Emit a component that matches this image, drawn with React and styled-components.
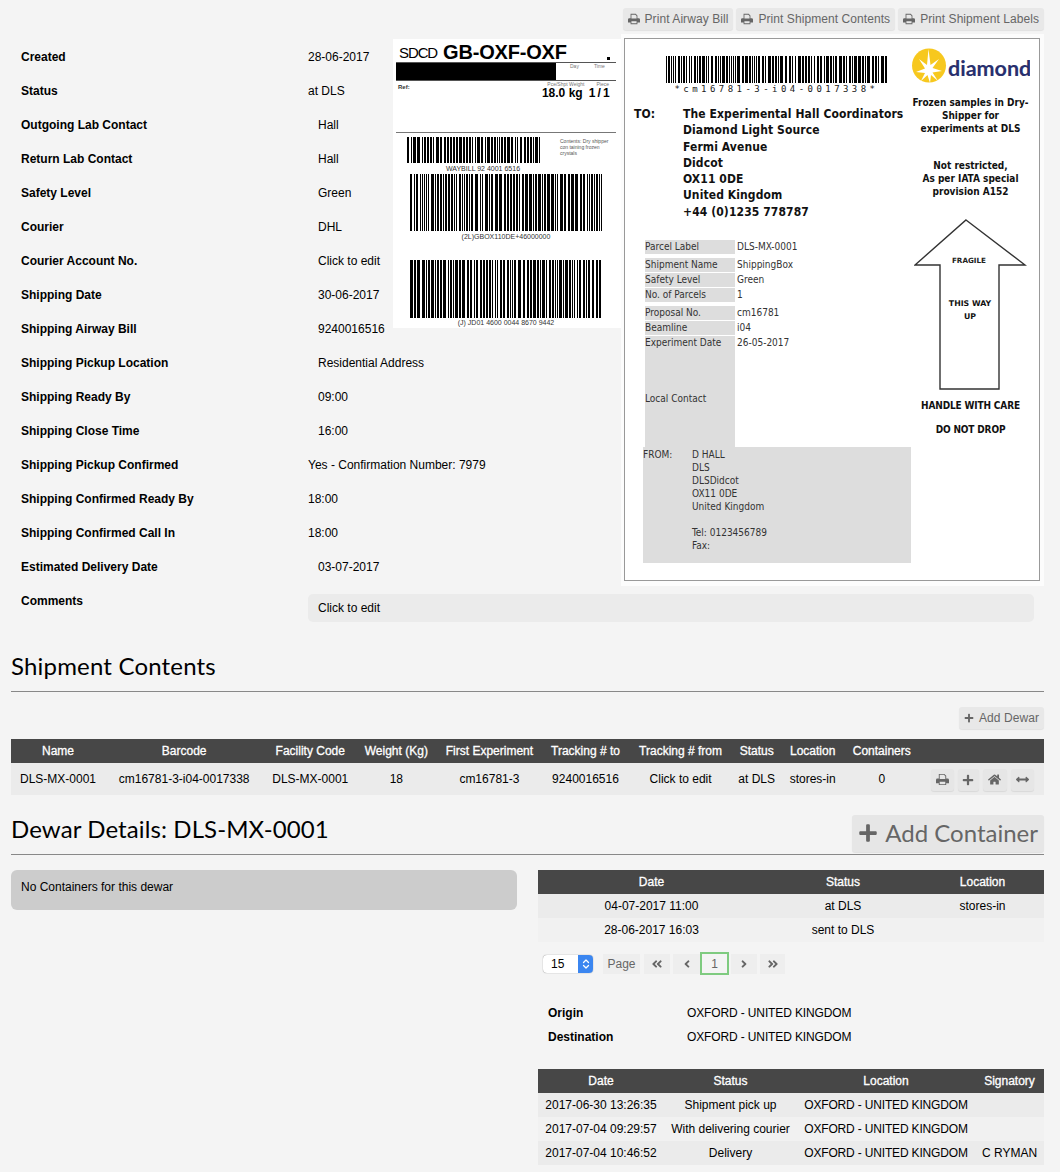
import React from 'react';
import styled, { createGlobalStyle } from 'styled-components';
import { FaPlus, FaHome, FaArrowsAltH, FaAngleDoubleLeft, FaAngleDoubleRight, FaAngleLeft, FaAngleRight } from 'react-icons/fa';
import { ChevronsUpDown } from 'lucide-react';

const details = [
    ['Created', '28-06-2017'],
    ['Status', 'at DLS'],
    ['Outgoing Lab Contact', 'Hall', true],
    ['Return Lab Contact', 'Hall', true],
    ['Safety Level', 'Green', true],
    ['Courier', 'DHL', true],
    ['Courier Account No.', 'Click to edit', true],
    ['Shipping Date', '30-06-2017', true],
    ['Shipping Airway Bill', '9240016516', true],
    ['Shipping Pickup Location', 'Residential Address', true],
    ['Shipping Ready By', '09:00', true],
    ['Shipping Close Time', '16:00', true],
    ['Shipping Pickup Confirmed', 'Yes - Confirmation Number: 7979'],
    ['Shipping Confirmed Ready By', '18:00'],
    ['Shipping Confirmed Call In', '18:00'],
    ['Estimated Delivery Date', '03-07-2017', true],
];

const dewarCols = [94, 158, 94, 78, 108, 84, 106, 46, 66, 72, 126];
const dewarHead = ['Name', 'Barcode', 'Facility Code', 'Weight (Kg)', 'First Experiment', 'Tracking # to', 'Tracking # from', 'Status', 'Location', 'Containers', ''];
const dewarRow = ['DLS-MX-0001', 'cm16781-3-i04-0017338', 'DLS-MX-0001', '18', 'cm16781-3', '9240016516', 'Click to edit', 'at DLS', 'stores-in', '0'];

const historyCols = [227, 156, 123];
const historyRows = [
    ['04-07-2017 11:00', 'at DLS', 'stores-in'],
    ['28-06-2017 16:03', 'sent to DLS', ''],
];

const trackingCols = [126, 133, 178, 69];
const trackingRows = [
    ['2017-06-30 13:26:35', 'Shipment pick up', 'OXFORD - UNITED KINGDOM', ''],
    ['2017-07-04 09:29:57', 'With delivering courier', 'OXFORD - UNITED KINGDOM', ''],
    ['2017-07-04 10:46:52', 'Delivery', 'OXFORD - UNITED KINGDOM', 'C RYMAN'],
];

const parcelGroups = [
    [['Parcel Label', 'DLS-MX-0001']],
    [['Shipment Name', 'ShippingBox'], ['Safety Level', 'Green'], ['No. of Parcels', '1']],
    [['Proposal No.', 'cm16781'], ['Beamline', 'i04'], ['Experiment Date', '26-05-2017']],
];

const PrintIcon = ({ size = 12 }) => (
    <svg width={size} height={size} viewBox="0 0 14 14" fill="currentColor">
        <path fillRule="evenodd" d="M3 1h6l2 2v3h1.5A1.5 1.5 0 0 1 14 7.5V11h-3v2H3v-2H0V7.5A1.5 1.5 0 0 1 1.5 6H3z M4 2v4.5h6V3.5L8.5 2z M4 9.5V12h6V9.5z" />
    </svg>
);

// pseudo random bars, seeded so the picture stays the same on every run
const Barcode = ({ code, width, height }) => {
    let seed = 0;
    for (const c of code) seed = (seed * 31 + c.charCodeAt(0)) % 9973;
    const next = () => {
        seed = (seed * 1103 + 12345) % 9973;
        return seed;
    };
    const bars = [];
    let x = 0;
    while (x < width) {
        const w = Math.min([1, 1, 2, 3, 2][next() % 5], width - x);
        bars.push(<rect key={x} x={x} y={0} width={w} height={height} />);
        x += w + [1, 1, 1, 2][next() % 4];
    }
    return (
        <svg width={width} height={height} viewBox={`0 0 ${width} ${height}`} shapeRendering="crispEdges" fill="#000" style={{ display: 'block' }}>
            {bars}
        </svg>
    );
};

const DiamondLogo = () => (
    <svg width="118" height="36" viewBox="0 0 118 36">
        <circle cx="17" cy="17.5" r="17" fill="#f7c81e" />
        <path
            fill="#fff"
            d="M16.5 1 L18.5 17 L27 11 L20.5 20 L30 23 L20.5 24.5 L26 33 L19 27 L18 35 L15.5 27 L9 33 L13 25 L4 24 L13 20.5 L7 11 L15 17 Z"
        />
        <text x="36" y="28" fontFamily="Lato, sans-serif" fontSize="21.5" fill="#28306e" stroke="#28306e" strokeWidth="0.1">diamond</text>
    </svg>
);

const FragileArrow = () => (
    <svg width="113" height="172" viewBox="0 0 113 172">
        <path d="M52 1 L111 46 L85 46 L85 170 L26 170 L26 46 L1 46 Z" fill="#fff" stroke="#333" strokeWidth="1.4" />
        <text x="55" y="44" textAnchor="middle" fontFamily="DejaVu Sans, sans-serif" fontSize="7.2" fontWeight="700" fill="#222">FRAGILE</text>
        <text x="56" y="87" textAnchor="middle" fontFamily="DejaVu Sans, sans-serif" fontSize="7.8" fontWeight="700" fill="#111">THIS WAY</text>
        <text x="56" y="100" textAnchor="middle" fontFamily="DejaVu Sans, sans-serif" fontSize="7.8" fontWeight="700" fill="#111">UP</text>
    </svg>
);

const DataTable = ({ cols, head, rows, rowHeight = 24, children }) => (
    <Table>
        <colgroup>
            {cols.map((w, i) => <Col key={i} $w={w} />)}
        </colgroup>
        <thead>
            <tr>{head.map((h, i) => <Th key={i}>{h}</Th>)}</tr>
        </thead>
        <tbody>
            {rows.map((r, i) => (
                <Tr key={i} $h={rowHeight}>
                    {r.map((c, j) => <Td key={j}>{c}</Td>)}
                    {children}
                </Tr>
            ))}
        </tbody>
    </Table>
);

const AirwayBill = () => (
    <Airway>
        <AirwayTitle>
            <Sdcd>SDCD</Sdcd>
            <Route>GB-OXF-OXF</Route>
            <Dot />
        </AirwayTitle>
        <AirwayBand>
            <BlackBar />
            <Tiny $left={14}>Day</Tiny>
            <Tiny $left={15}>Time</Tiny>
        </AirwayBand>
        <AirwayRef>
            <RefLabel>Ref:</RefLabel>
            <Weight>
                <WeightHead><Tiny>Pce/Shpt Weight</Tiny><Tiny $left={12}>Piece</Tiny></WeightHead>
                <WeightValue><span>18.0 kg</span><Pieces>1 / 1</Pieces></WeightValue>
            </Weight>
        </AirwayRef>
        <WaybillRow>
            <BarBlock>
                <Barcode code="92400165" width={133} height={26} />
                <BarText $top={1} $shift={19}>WAYBILL 92 4001 6516</BarText>
            </BarBlock>
            <Contents>Contents: Dry shipper<br />con taining frozen<br />crystals</Contents>
        </WaybillRow>
        <BarBlock $left={14} $top={1}>
            <Barcode code="GBOX110DE" width={192} height={57} />
            <BarText $top={1}>(2L)GBOX110DE+46000000</BarText>
        </BarBlock>
        <BarBlock $left={14} $top={19}>
            <Barcode code="JD01460" width={192} height={58} />
            <BarText>(J) JD01 4600 0044 8670 9442</BarText>
        </BarBlock>
    </Airway>
);

const ShippingLabel = () => (
    <LabelPanel>
        <LabelFrame>
            <LabelLeft>
                <CodeBlock>
                    <Barcode code="cm16781-3-i04" width={221} height={27} />
                    <CodeText>*cm16781-3-i04-0017338*</CodeText>
                </CodeBlock>
                <Address>
                    <AddressTo>TO:</AddressTo>
                    <div>
                        The Experimental Hall Coordinators<br />
                        Diamond Light Source<br />
                        Fermi Avenue<br />
                        Didcot<br />
                        OX11 0DE<br />
                        United Kingdom<br />
                        +44 (0)1235 778787
                    </div>
                </Address>
                <ParcelTable>
                    {parcelGroups.map((g, i) => (
                        <ParcelGroup key={i}>
                            {g.map(([k, v]) => (
                                <ParcelRow key={k}>
                                    <ParcelKey>{k}</ParcelKey>
                                    <span>{v}</span>
                                </ParcelRow>
                            ))}
                        </ParcelGroup>
                    ))}
                    <ParcelRow>
                        <ParcelKey $tall>Local Contact</ParcelKey>
                        <span />
                    </ParcelRow>
                </ParcelTable>
                <FromBox>
                    <FromLabel>FROM:</FromLabel>
                    <div>
                        D HALL<br />DLS<br />DLSDidcot<br />OX11 0DE<br />United Kingdom<br /><br />
                        Tel: 0123456789<br />Fax:
                    </div>
                </FromBox>
            </LabelLeft>
            <LabelRight>
                <DiamondLogo />
                <LabelNote $top={12}>Frozen samples in Dry-<br />Shipper for<br />experiments at DLS</LabelNote>
                <LabelNote $top={24}>Not restricted,<br />As per IATA special<br />provision A152</LabelNote>
                <ArrowWrap><FragileArrow /></ArrowWrap>
                <Handle $top={8}>HANDLE WITH CARE</Handle>
                <Handle $top={10}>DO NOT DROP</Handle>
            </LabelRight>
        </LabelFrame>
    </LabelPanel>
);

const App = () => {
    return (
        <Page>
            <GlobalStyle />
            <TopBar>
                <Button><PrintIcon /> Print Airway Bill</Button>
                <Button><PrintIcon /> Print Shipment Contents</Button>
                <Button><PrintIcon /> Print Shipment Labels</Button>
            </TopBar>
            <DetailArea>
                <ShippingLabel />
                <AirwayBill />
                {details.map(([k, v, editable]) => (
                    <DetailRow key={k}>
                        <DetailLabel>{k}</DetailLabel>
                        <DetailValue $editable={editable}>{v}</DetailValue>
                    </DetailRow>
                ))}
                <DetailRow>
                    <DetailLabel>Comments</DetailLabel>
                    <CommentBox>Click to edit</CommentBox>
                </DetailRow>
            </DetailArea>

            <Heading>Shipment Contents</Heading>
            <ButtonRow>
                <Button><FaPlus size={10} /> Add Dewar</Button>
            </ButtonRow>
            <DewarTable>
                <DataTable cols={dewarCols} head={dewarHead} rows={[dewarRow]} rowHeight={32}>
                    <Td>
                        <Actions>
                            <ActionButton $w={23}><PrintIcon size={13} /></ActionButton>
                            <ActionButton $w={21}><FaPlus size={12} /></ActionButton>
                            <ActionButton $w={24}><FaHome size={13} /></ActionButton>
                            <ActionButton $w={23}><FaArrowsAltH size={13} /></ActionButton>
                        </Actions>
                    </Td>
                </DataTable>
            </DewarTable>

            <DewarHeader>
                <DewarTitle>Dewar Details: DLS-MX-0001</DewarTitle>
                <BigButton><FaPlus size={20} /> Add Container</BigButton>
            </DewarHeader>
            <Columns>
                <NoContainers>No Containers for this dewar</NoContainers>
                <div>
                    <DataTable cols={historyCols} head={['Date', 'Status', 'Location']} rows={historyRows} />
                    <Pager>
                        <SelectBox>
                            <SelectText>15</SelectText>
                            <SelectCap><ChevronsUpDown size={12} strokeWidth={2.5} /></SelectCap>
                        </SelectBox>
                        <PageLabel>Page</PageLabel>
                        <PageLink $w={26}><FaAngleDoubleLeft size={12} /></PageLink>
                        <PageLink $w={27}><FaAngleLeft size={12} /></PageLink>
                        <PageCurrent>1</PageCurrent>
                        <PageLink $w={26}><FaAngleRight size={12} /></PageLink>
                        <PageLink $w={25}><FaAngleDoubleRight size={12} /></PageLink>
                    </Pager>
                    <RouteList>
                        <RouteRow><RouteKey>Origin</RouteKey><RouteValue>OXFORD - UNITED KINGDOM</RouteValue></RouteRow>
                        <RouteRow><RouteKey>Destination</RouteKey><RouteValue>OXFORD - UNITED KINGDOM</RouteValue></RouteRow>
                    </RouteList>
                    <TrackingTable>
                        <DataTable cols={trackingCols} head={['Date', 'Status', 'Location', 'Signatory']} rows={trackingRows} />
                    </TrackingTable>
                </div>
            </Columns>
        </Page>
    );
};

export default App;

const GlobalStyle = createGlobalStyle`
    html, body {
        margin: 0;
        padding: 0;
        background: #f4f4f4;
        overflow: hidden;
    }
    * {
        box-sizing: border-box;
    }
`;

const Page = styled.div`
    width: 1060px;
    height: 1172px;
    padding: 8px 16px 0 11px;
    font-family: "Liberation Sans", Arial, sans-serif;
    font-size: 12px;
    line-height: 14px;
    color: #000;
`;

const TopBar = styled.div`
    display: flex;
    justify-content: flex-end;
    gap: 3px;
    margin-bottom: 4px;
`;

const ButtonRow = styled.div`
    display: flex;
    justify-content: flex-end;
    margin-top: 15px;
`;

const Button = styled.div`
    display: inline-flex;
    align-items: center;
    gap: 5px;
    height: 22px;
    padding: 0 5px;
    background: #e8e8e8;
    border-radius: 3px;
    box-shadow: 0 1px 1px rgba(0, 0, 0, 0.08);
    color: #666;
    letter-spacing: 0.07px;
    white-space: nowrap;
`;

const DetailArea = styled.div`
    padding-top: 6px;
    margin-top: 0;
`;

const DetailRow = styled.div`
    display: flex;
    padding: 10px 0;
    &:last-child {
        padding-bottom: 0;
    }
`;

const DetailLabel = styled.div`
    flex: 0 0 297px;
    padding-left: 10px;
    font-weight: 700;
`;

const DetailValue = styled.div`
    padding-left: ${(p) => (p.$editable ? '10px' : '0')};
`;

const CommentBox = styled.div`
    width: 726px;
    height: 28px;
    padding: 7px 10px;
    background: #ebebeb;
    border-radius: 5px;
`;

const LabelPanel = styled.div`
    float: right;
    width: 423px;
    height: 552px;
    margin: -6px 0 -2px 0;
    padding: 4px 4px 5px 3px;
    background: #fcfcfc;
`;

const LabelFrame = styled.div`
    display: flex;
    height: 543px;
    border: 1px solid #999;
    background: #fff;
    font-family: "DejaVu Sans Condensed", "DejaVu Sans", sans-serif;
`;

const LabelLeft = styled.div`
    width: 286px;
`;

const CodeBlock = styled.div`
    margin: 17px 0 0 41px;
`;

const CodeText = styled.div`
    width: 221px;
    font-family: "DejaVu Sans Mono", monospace;
    font-size: 9px;
    line-height: 12px;
    letter-spacing: 3.45px;
    text-align: center;
    color: #222;
`;

const Address = styled.div`
    display: flex;
    margin-top: 11px;
    padding-left: 9px;
    font-size: 12px;
    font-weight: 700;
    line-height: 16.3px;
    letter-spacing: 0.1px;
    color: #111;
    white-space: nowrap;
`;

const AddressTo = styled.div`
    flex: 0 0 49px;
`;

const ParcelTable = styled.div`
    margin: 20px 0 0 20px;
    font-size: 10px;
    line-height: 14px;
    color: #333;
`;

const ParcelGroup = styled.div`
    display: flex;
    flex-direction: column;
    gap: 1px;
    margin-bottom: 4px;
    &:nth-child(3) {
        margin-bottom: 0;
    }
`;

const ParcelRow = styled.div`
    display: flex;
    gap: 2px;
`;

const ParcelKey = styled.div`
    display: flex;
    align-items: center;
    width: 90px;
    height: ${(p) => (p.$tall ? '97px' : '14px')};
    background: #ddd;
`;

const FromBox = styled.div`
    display: flex;
    width: 268px;
    height: 116px;
    margin-left: 18px;
    padding-top: 1px;
    background: #ddd;
    font-size: 10px;
    line-height: 13px;
    color: #333;
`;

const FromLabel = styled.div`
    flex: 0 0 49px;
`;

const LabelRight = styled.div`
    display: flex;
    flex-direction: column;
    align-items: center;
    width: 119px;
    padding-top: 9px;
    font-weight: 700;
    color: #111;
`;

const LabelNote = styled.div`
    margin-top: ${(p) => p.$top}px;
    font-size: 10px;
    line-height: 13px;
    text-align: center;
    white-space: nowrap;
`;

const ArrowWrap = styled.div`
    margin-top: 21px;
    line-height: 0;
`;

const Handle = styled.div`
    margin-top: ${(p) => p.$top}px;
    font-size: 10px;
    line-height: 14px;
    letter-spacing: -0.15px;
    white-space: nowrap;
`;

const Airway = styled.div`
    float: right;
    width: 228px;
    height: 289px;
    margin-top: -1px;
    padding: 4px 5px 0 3px;
    background: #fff;
`;

const AirwayTitle = styled.div`
    display: flex;
    align-items: center;
    gap: 6px;
    height: 19px;
    padding-left: 3px;
`;

const Sdcd = styled.span`
    font-size: 15px;
    letter-spacing: -1.1px;
`;

const Route = styled.span`
    font-size: 20px;
    font-weight: 700;
    line-height: 19px;
    letter-spacing: -0.2px;
`;

const Dot = styled.span`
    width: 3px;
    height: 3px;
    margin: 11px 6px 0 auto;
    background: #000;
`;

const AirwayBand = styled.div`
    display: flex;
    height: 19px;
    border-top: 1px solid #555;
    border-bottom: 1px solid #555;
`;

const BlackBar = styled.div`
    width: 160px;
    height: 100%;
    background: #000;
`;

const Tiny = styled.span`
    margin-left: ${(p) => p.$left || 0}px;
    font-size: 5px;
    line-height: 6px;
    color: #777;
`;

const AirwayRef = styled.div`
    display: flex;
    justify-content: space-between;
    height: 52px;
    padding: 2px 7px 0 2px;
    border-bottom: 1px solid #777;
`;

const RefLabel = styled.span`
    font-size: 6px;
    font-weight: 700;
    line-height: 8px;
    color: #333;
`;

const Weight = styled.div`
    display: flex;
    flex-direction: column;
    align-items: flex-end;
    margin-top: -2px;
`;

const WeightHead = styled.div`
    display: flex;
    line-height: 6px;
`;

const WeightValue = styled.div`
    display: flex;
    gap: 6px;
    margin-top: -1px;
    font-size: 12px;
    font-weight: 700;
    line-height: 14px;
    white-space: nowrap;
`;

const Pieces = styled.span`
    letter-spacing: -0.6px;
`;

const WaybillRow = styled.div`
    display: flex;
    margin-top: 4px;
`;

const BarBlock = styled.div`
    margin: ${(p) => p.$top || 0}px 0 0 ${(p) => p.$left ?? 11}px;
    width: fit-content;
`;

const BarText = styled.div`
    margin-top: ${(p) => p.$top || 0}px;
    margin-left: ${(p) => p.$shift || 0}px;
    font-size: 7px;
    line-height: 9px;
    text-align: center;
    color: #333;
    white-space: nowrap;
`;

const Contents = styled.div`
    margin: 1px 0 0 20px;
    font-size: 5px;
    line-height: 6px;
    color: #555;
    white-space: nowrap;
`;

const Heading = styled.h2`
    clear: both;
    margin: 30px 0 0;
    padding-bottom: 11px;
    border-bottom: 1px solid #888;
    font-family: Lato, sans-serif;
    font-size: 24px;
    font-weight: 400;
    line-height: 28px;
    letter-spacing: 0.18px;
`;

const DewarTable = styled.div`
    margin-top: 10px;
`;

const TrackingTable = styled.div`
    td:nth-child(3) {
        letter-spacing: -0.17px;
    }
`;

const Table = styled.table`
    width: 100%;
    table-layout: fixed;
    border-collapse: collapse;
    text-align: center;
    tbody tr:nth-child(even) {
        background: #f1f1f1;
    }
`;

const Col = styled.col`
    width: ${(p) => p.$w}px;
`;

const Th = styled.th`
    height: 24px;
    padding: 0;
    background: #474747;
    color: #fff;
    font-weight: 400;
    -webkit-text-stroke: 0.3px #fff;
    white-space: nowrap;
`;

const Tr = styled.tr`
    height: ${(p) => p.$h}px;
    background: #ebebeb;
`;

const Td = styled.td`
    padding: 0;
    white-space: nowrap;
`;

const Actions = styled.div`
    display: flex;
    gap: 4px;
    padding: 1px 0 0 13px;
`;

const ActionButton = styled.div`
    display: flex;
    align-items: center;
    justify-content: center;
    width: ${(p) => p.$w}px;
    height: 22px;
    background: #e6e6e6;
    border-radius: 3px;
    box-shadow: 0 1px 1px rgba(0, 0, 0, 0.08);
    color: #666;
`;

const DewarHeader = styled.div`
    display: flex;
    justify-content: space-between;
    align-items: flex-start;
    margin-top: 20px;
    padding-bottom: 2px;
    border-bottom: 1px solid #888;
`;

const DewarTitle = styled.h2`
    margin: 0;
    font-family: Lato, sans-serif;
    font-size: 24px;
    font-weight: 400;
    line-height: 28px;
    letter-spacing: 0.1px;
`;

const BigButton = styled.div`
    display: inline-flex;
    align-items: center;
    gap: 7px;
    height: 37px;
    padding: 0 6px 1px;
    background: #e6e6e6;
    border-radius: 3px;
    box-shadow: 0 1px 1px rgba(0, 0, 0, 0.08);
    color: #666;
    font-family: Lato, sans-serif;
    font-size: 24px;
    white-space: nowrap;
`;

const Columns = styled.div`
    display: grid;
    grid-template-columns: 506px 506px;
    justify-content: space-between;
    align-items: start;
    margin-top: 15px;
`;

const NoContainers = styled.div`
    padding: 10px 10px 16px;
    background: #ccc;
    border-radius: 6px;
`;

const Pager = styled.div`
    display: flex;
    align-items: center;
    height: 23px;
    margin: 10px 0 0 5px;
`;

const SelectBox = styled.div`
    display: flex;
    width: 50px;
    height: 18px;
    margin-right: 10px;
    background: #fff;
    border-radius: 4px;
    box-shadow: 0 0 1px rgba(0, 0, 0, 0.6);
    overflow: hidden;
`;

const SelectText = styled.span`
    flex: 1;
    padding: 2px 0 0 8px;
`;

const SelectCap = styled.span`
    display: flex;
    align-items: center;
    justify-content: center;
    width: 15px;
    background: #3b86f0;
    color: #fff;
`;

const PageLabel = styled.div`
    display: flex;
    align-items: center;
    justify-content: center;
    width: 37px;
    height: 20px;
    margin-right: 4px;
    background: #eee;
    color: #666;
`;

const PageLink = styled.div`
    display: flex;
    align-items: center;
    justify-content: center;
    width: ${(p) => p.$w}px;
    height: 20px;
    margin-right: 3px;
    background: #eee;
    color: #666;
`;

const PageCurrent = styled.div`
    display: flex;
    align-items: center;
    justify-content: center;
    width: 29px;
    height: 23px;
    margin: 0 2px 0 -3px;
    border: 2px solid #7fcb80;
    color: #666;
`;

const RouteList = styled.div`
    margin: 26px 0 20px;
`;

const RouteRow = styled.div`
    display: flex;
    align-items: center;
    height: 24px;
    padding-left: 10px;
`;

const RouteKey = styled.span`
    flex: 0 0 139px;
    font-weight: 700;
`;

const RouteValue = styled.span`
    letter-spacing: -0.13px;
`;
